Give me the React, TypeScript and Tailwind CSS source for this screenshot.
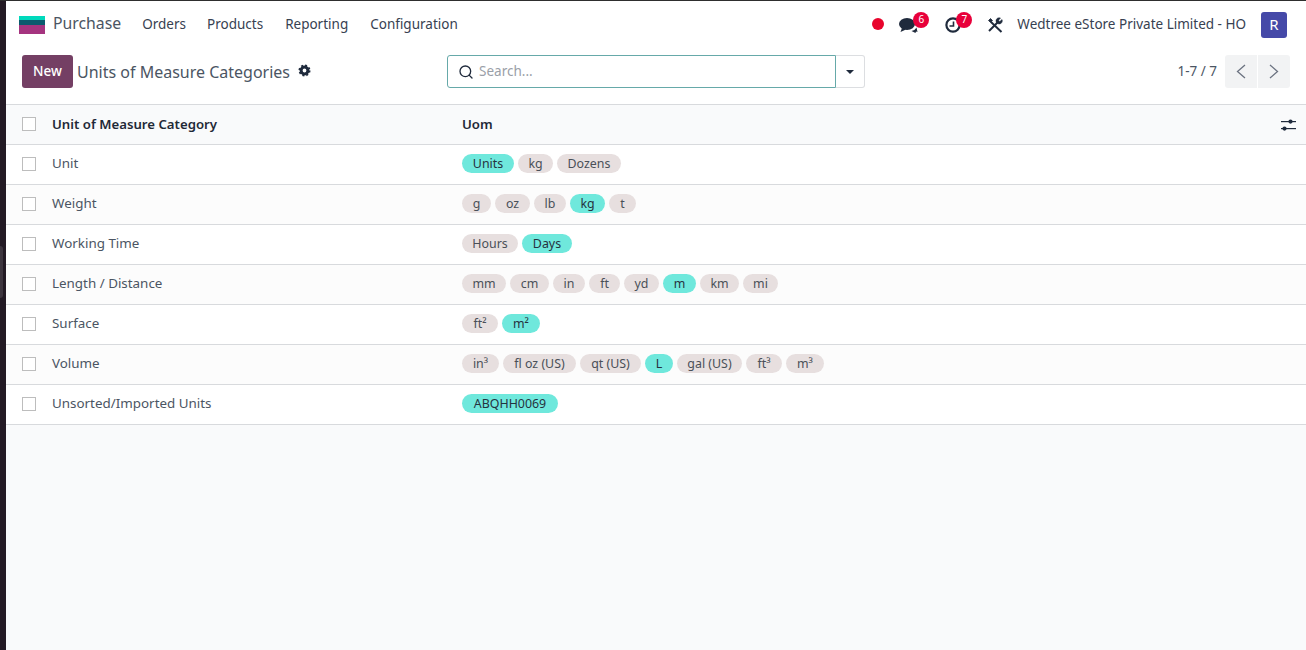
import React from "react";
import { Search } from "lucide-react";

type TagDef = { label: string; on?: boolean; w: string };

const rows: { name: string; tags: TagDef[] }[] = [
    { name: "Unit", tags: [{ label: "Units", on: true, w: "w-[52px]" }, { label: "kg", w: "w-[35px]" }, { label: "Dozens", w: "w-[64px]" }] },
    {
        name: "Weight",
        tags: [
            { label: "g", w: "w-[29px]" },
            { label: "oz", w: "w-[35px]" },
            { label: "lb", w: "w-[32px]" },
            { label: "kg", on: true, w: "w-[35px]" },
            { label: "t", w: "w-[27px]" },
        ],
    },
    { name: "Working Time", tags: [{ label: "Hours", w: "w-[56px]" }, { label: "Days", on: true, w: "w-[50px]" }] },
    {
        name: "Length / Distance",
        tags: [
            { label: "mm", w: "w-[44px]" },
            { label: "cm", w: "w-[39px]" },
            { label: "in", w: "w-[32px]" },
            { label: "ft", w: "w-[31px]" },
            { label: "yd", w: "w-[35px]" },
            { label: "m", on: true, w: "w-[33px]" },
            { label: "km", w: "w-[39px]" },
            { label: "mi", w: "w-[35px]" },
        ],
    },
    { name: "Surface", tags: [{ label: "ft²", w: "w-[36px]" }, { label: "m²", on: true, w: "w-[38px]" }] },
    {
        name: "Volume",
        tags: [
            { label: "in³", w: "w-[37px]" },
            { label: "fl oz (US)", w: "w-[73px]" },
            { label: "qt (US)", w: "w-[61px]" },
            { label: "L", on: true, w: "w-[28px]" },
            { label: "gal (US)", w: "w-[65px]" },
            { label: "ft³", w: "w-[36px]" },
            { label: "m³", w: "w-[38px]" },
        ],
    },
    { name: "Unsorted/Imported Units", tags: [{ label: "ABQHH0069", on: true, w: "w-[96px]" }] },
];

const Check = () => <span className="block w-[14px] h-[14px] -mt-px border border-[#bdbdbd] bg-white" />;

const Tag = ({ label, on, w }: TagDef) => (
    <span className={`h-[19px] ${w} pt-px rounded-full flex items-center justify-center whitespace-nowrap text-[12.4px] leading-none ${on ? "bg-[#6fe8dc] text-[#26323f]" : "bg-[#e7dfdf] text-[#4a5058]"}`}>
        {label}
    </span>
);

const Badge = ({ n, left }: { n: number; left: string }) => (
    <span className={`absolute -top-[5px] ${left} w-[16px] h-[16px] rounded-full bg-[#e8003a] text-white text-[10px] flex items-center justify-center`}>
        {n}
    </span>
);

const App = () => {
    return (
        <div className="w-[1306px] h-[650px] overflow-hidden flex flex-col bg-[#2e2e2e] pt-px font-['Noto_Sans',sans-serif] text-[13.5px] text-[#374151]">
            <div className="flex flex-1 min-h-0">
                <div className="w-[6px] bg-[#231a24] relative shrink-0">
                    <div className="absolute top-[245px] left-0 w-[3px] h-[52px] rounded-r bg-[#3d353e]" />
                </div>
                <div className="flex-1 flex flex-col bg-[#f9fafb] min-w-0">
                    <nav className="h-[47px] bg-white flex items-center pl-[13px] pr-[19px] shrink-0">
                        <svg width="26" height="18" viewBox="0 0 26 18" className="mr-[8px]">
                            <rect width="26" height="4" fill="#00d9bc" />
                            <rect y="4" width="26" height="5" fill="#0b5a6e" />
                            <rect y="9" width="26" height="9" fill="#a5347f" />
                        </svg>
                        <span className="text-[15.8px] text-[#4b5563] -mt-[1px]">Purchase</span>
                        <div className="flex ml-[21px] text-[#374151]">
                            <span>Orders</span>
                            <span className="ml-[21px]">Products</span>
                            <span className="ml-[22px]">Reporting</span>
                            <span className="ml-[22px]">Configuration</span>
                        </div>
                        <div className="ml-auto flex items-center">
                            <span className="w-[12px] h-[12px] rounded-full bg-[#e8042c] -mt-[1px]" />
                            <span className="relative ml-[15px] w-[19px] h-[16px]">
                                <svg width="19" height="16" viewBox="0 0 19 16" fill="#1f2a3c">
                                    <ellipse cx="8" cy="7" rx="8" ry="6" />
                                    <path d="M3 11 L1.5 15 L7 12.5z" />
                                    <path d="M12.5 14 Q16 13.5 17.5 10.5 L18.5 15 L17 14.5 L16.5 16z" />
                                </svg>
                                <Badge n={6} left="left-[14px]" />
                            </span>
                            <span className="relative ml-[27px] w-[16px] h-[16px]">
                                <svg width="16" height="16" viewBox="0 0 16 16" fill="none" stroke="#1f2a3c">
                                    <circle cx="8" cy="8" r="6.6" strokeWidth="2.2" />
                                    <path d="M8.5 4.5V9H4.5" strokeWidth="1.6" />
                                </svg>
                                <Badge n={7} left="left-[11px]" />
                            </span>
                            <svg width="16" height="16" viewBox="0 0 16 16" className="ml-[26px]" fill="none" stroke="#1f2a3c">
                                <path d="M4 5 L14.5 15" strokeWidth="2" />
                                <path d="M1.5 3.5 L3.5 1.5 L5.5 3.5 L3.5 5.5z" fill="#1f2a3c" strokeWidth="0.8" />
                                <path d="M10.5 5.5 L2 14" strokeWidth="2" />
                                <path d="M15 2.4 A3.2 3.2 0 1 1 13.6 1 L11.6 3.2 L12.8 4.4z" fill="#1f2a3c" strokeWidth="0.4" />
                            </svg>
                            <span className="ml-[14px] text-[#374151] -mt-[1px]">Wedtree eStore Private Limited - HO</span>
                            <span className="ml-[15px] w-[26px] h-[26px] rounded-[3px] bg-[#4549a8] text-white text-[15px] flex items-center justify-center">R</span>
                        </div>
                    </nav>
                    <div className="h-[57px] bg-white flex items-start pt-[7px] pl-[16px] pr-[16px] shrink-0 border-b border-[#d8dadd]">
                        <button className="w-[51px] h-[33px] rounded-[3px] bg-[#743f64] text-white text-[13.5px] font-medium">New</button>
                        <span className="ml-[4px] h-[33px] flex items-center text-[16px] text-[#4b5563]">Units of Measure Categories</span>
                        <svg width="13" height="13" viewBox="0 0 13 13" className="ml-[8px] mt-[9px]" fill="none" stroke="#1f2a3c">
                            <circle cx="6.5" cy="6.5" r="3.4" strokeWidth="3" />
                            <circle cx="6.5" cy="6.5" r="5.2" strokeWidth="1.6" strokeDasharray="2 2.08" />
                        </svg>
                        <div className="ml-[136px] flex w-[418px] h-[33px]">
                            <div className="flex-1 flex items-center border border-[#66a9a9] rounded-l-[3px] pl-[10px]">
                                <Search size={16} strokeWidth={2} className="text-[#1f2a3c]" />
                                <span className="ml-[5px] text-[#9aa0a8]">Search...</span>
                            </div>
                            <div className="w-[29px] flex items-center justify-center border border-l-0 border-[#dcdee1] rounded-r-[3px]">
                                <span className="border-x-[4.5px] border-x-transparent border-t-[4.5px] border-t-[#1f2a3c]" />
                            </div>
                        </div>
                        <span className="ml-auto mr-[8px] h-[33px] flex items-center text-[#4b5563]">1-7 / 7</span>
                        <div className="flex gap-px">
                            <span className="w-[32px] h-[33px] bg-[#f2f3f4] rounded-l-[3px] flex items-center justify-center">
                                <svg width="10" height="15" viewBox="0 0 10 15" fill="none" stroke="#6b7280" strokeWidth="1.3">
                                    <path d="M9 1 L1.5 7.5 L9 14" />
                                </svg>
                            </span>
                            <span className="w-[32px] h-[33px] bg-[#f2f3f4] rounded-r-[3px] flex items-center justify-center">
                                <svg width="10" height="15" viewBox="0 0 10 15" fill="none" stroke="#6b7280" strokeWidth="1.3">
                                    <path d="M1 1 L8.5 7.5 L1 14" />
                                </svg>
                            </span>
                        </div>
                    </div>
                    <div className="h-[40px] bg-[#f9fafb] flex items-center border-b border-[#d8dadd] font-semibold text-[13.2px] text-[#1f2937] shrink-0">
                        <div className="w-[46px] pl-[16px]"><Check /></div>
                        <div className="w-[410px]">Unit of Measure Category</div>
                        <div className="flex-1">Uom</div>
                        <svg width="15" height="14" viewBox="0 0 15 14" className="mr-[10px]" fill="#1f2a3c">
                            <rect y="3" width="15" height="1.2" />
                            <rect y="10" width="15" height="1.2" />
                            <circle cx="9.5" cy="3.6" r="2.1" />
                            <circle cx="3.5" cy="10.6" r="2.1" />
                        </svg>
                    </div>
                    {rows.map((row, i) => (
                        <div key={row.name} className={`h-[40px] flex items-center border-b border-[#d8dadd] shrink-0 ${i % 2 ? "bg-[#fcfcfc]" : "bg-white"}`}>
                            <div className="w-[46px] pl-[16px]"><Check /></div>
                            <div className="w-[410px] text-[13.4px] text-[#4b5563] -mt-[3px]">{row.name}</div>
                            <div className="flex gap-[4px] -mt-[2px]">
                                {row.tags.map((tag) => (
                                    <Tag key={tag.label} {...tag} />
                                ))}
                            </div>
                        </div>
                    ))}
                </div>
            </div>
        </div>
    );
};

export default App;
